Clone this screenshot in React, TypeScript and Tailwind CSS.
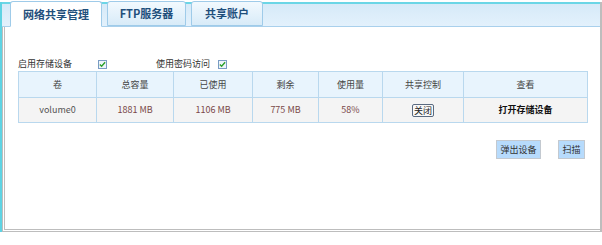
import React from "react"

const cols = [
  { label: "卷", w: "w-[78px]" },
  { label: "总容量", w: "w-[77px]" },
  { label: "已使用", w: "w-[79px]" },
  { label: "剩余", w: "w-[66px]" },
  { label: "使用量", w: "w-[64px]" },
  { label: "共享控制", w: "w-[81px]" },
  { label: "查看", w: "flex-1" },
]

function Check() {
  return (
    <span className="inline-flex h-[9px] w-[9px] items-center justify-center border border-[#7a9cc4] bg-[#eef4fb]">
      <svg viewBox="0 0 8 8" className="h-[7px] w-[7px]">
        <path d="M1 4 L3 6 L7 1.5" fill="none" stroke="#2aa02a" strokeWidth="1.6" />
      </svg>
    </span>
  )
}

function Tab({ label, active, w }: { label: string; active?: boolean; w: string }) {
  return (
    <div
      className={`${w} flex h-[25px] items-center justify-center rounded-t-[3px] border border-[#9fcbe9] text-[11px] font-bold text-[#1f4f7c] ${
        active ? "mb-[-1px] h-[26px] border-b-white bg-white" : "bg-gradient-to-b from-[#f2f9fe] to-[#d8ebf8]"
      }`}
    >
      {label}
    </div>
  )
}

export default function App() {
  return (
    <div className="h-[245px] w-[602px] bg-white pt-[2px] font-['Noto_Sans_CJK_SC','Liberation_Sans',sans-serif] text-[9px] text-[#444]">
      <div className="flex h-[230px]">
        <div className="w-[2px] bg-[#5fd3e3]" />
        <div className="flex flex-1 flex-col border-r-2 border-[#bdbdbd]">
          {/* tab bar */}
          <div className="flex h-[25px] items-end gap-[5px] border-t-2 border-b border-t-[#6bd6e6] border-b-[#a9d0ec] bg-gradient-to-b from-[#d6eaf8] to-[#e3f1fc] pl-[8px]">
            <Tab label="网络共享管理" active w="w-[92px]" />
            <Tab label="FTP服务器" w="w-[79px]" />
            <Tab label="共享账户" w="w-[72px]" />
          </div>

          {/* content */}
          <div className="flex flex-1 flex-col border-b-[3px] border-l-[3px] border-double border-[#bdbdbd] pl-[13px] pr-[12px]">
            <div className="mt-[31px] flex h-[12px] items-center text-[9px] text-[#333]">
              <span className="w-[80px]">启用存储设备</span>
              <Check />
              <span className="ml-[49px] w-[62px]">使用密码访问</span>
              <Check />
            </div>

            <div className="mt-[1px] border border-[#b9d8ee]">
              <div className="flex h-[25px] bg-[#e8f4fd]">
                {cols.map((c, i) => (
                  <div
                    key={c.label}
                    className={`${c.w} flex items-center justify-center ${i < cols.length - 1 ? "border-r border-[#b9d8ee]" : ""}`}
                  >
                    {c.label}
                  </div>
                ))}
              </div>
              <div className="flex h-[25px] border-t border-[#b9d8ee] bg-[#f4f4f4]">
                <div className="flex w-[78px] items-center justify-center border-r border-[#b9d8ee] text-[#555]">volume0</div>
                <div className="flex w-[77px] items-center justify-center border-r border-[#b9d8ee] text-[#7a4848]">1881 MB</div>
                <div className="flex w-[79px] items-center justify-center border-r border-[#b9d8ee] text-[#7a4848]">1106 MB</div>
                <div className="flex w-[66px] items-center justify-center border-r border-[#b9d8ee] text-[#7a4848]">775 MB</div>
                <div className="flex w-[64px] items-center justify-center border-r border-[#b9d8ee] text-[#7a4848]">58%</div>
                <div className="flex w-[81px] items-center justify-center border-r border-[#b9d8ee]">
                  <span className="rounded-[2px] border border-[#5a6a80] bg-[#f8f8f8] px-[1px] leading-[11px] text-[#222]">关闭</span>
                </div>
                <div className="flex flex-1 items-center justify-center font-bold text-[#111]">打开存储设备</div>
              </div>
            </div>

            <div className="mt-[17px] flex justify-end gap-[17px] pr-[3px]">
              <button className="h-[19px] w-[45px] border border-[#c3c9d0] bg-[#b7dbfc] text-[9px] text-[#333]">弹出设备</button>
              <button className="h-[19px] w-[27px] border border-[#c3c9d0] bg-[#b7dbfc] text-[9px] text-[#333]">扫描</button>
            </div>
          </div>
        </div>
      </div>
    </div>
  )
}
